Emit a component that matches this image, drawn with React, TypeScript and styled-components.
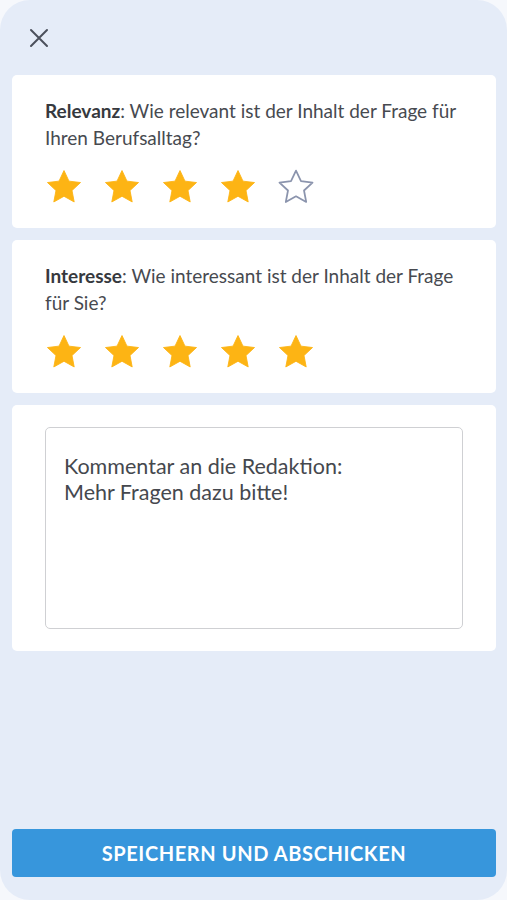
import styled, { createGlobalStyle } from 'styled-components'

const GlobalStyle = createGlobalStyle`
  html, body {
    margin: 0;
    padding: 0;
    background: #f6f8fc;
  }
  * { box-sizing: border-box; }
`

const Frame = styled.div`
  min-height: 900px;
  width: 507px;
  display: flex;
  flex-direction: column;
  background: #e5ecf8;
  border-radius: 30px;
  padding: 0 11px 23px 12px;
  font-family: Lato, "Noto Sans", sans-serif;
  color: #43474d;
`

const Header = styled.div`
  height: 75px;
  display: flex;
  align-items: center;
  padding-left: 17px;
`

const CloseButton = styled.button`
  border: none;
  background: none;
  padding: 0;
  width: 20px;
  height: 20px;
  display: flex;
  cursor: pointer;
  margin-top: 1px;
`

const Cards = styled.div`
  display: flex;
  flex-direction: column;
  gap: 12px;
`

const Card = styled.section<{ $pad?: string }>`
  background: #fff;
  border-radius: 5px;
  padding: ${p => p.$pad || '22px 30px 20px 33px'};
`

const Question = styled.p`
  margin: 0;
  font-size: 19px;
  line-height: 27px;
  color: #474a50;

  b {
    font-weight: 700;
    color: #36393e;
  }
`

const Stars = styled.div`
  display: flex;
  gap: 16px;
  margin-top: 15px;
  margin-left: -2px;
`

const StarIcon = styled.svg`
  width: 42px;
  height: 42px;
  display: block;
`

const CommentBox = styled.div`
  height: 202px;
  border: 1.5px solid #cfd0d3;
  border-radius: 5px;
  padding: 25px 18px;
  font-size: 21.5px;
  line-height: 26px;
  color: #45484e;
`

const Spacer = styled.div`
  flex: 1;
`

const SubmitButton = styled.button`
  height: 48px;
  width: 100%;
  border: none;
  border-radius: 4px;
  background: #3796dc;
  color: #fff;
  font-family: Lato, "Noto Sans", sans-serif;
  font-weight: 700;
  font-size: 20px;
  letter-spacing: 0.6px;
  text-transform: uppercase;
  cursor: pointer;
`

const Star = ({ filled }: { filled: boolean }) => (
  <StarIcon viewBox="0 0 24 24">
    <path
      d="M12 2.6l2.85 6.05 6.6.8-4.87 4.55 1.25 6.55L12 17.3l-5.83 3.25 1.25-6.55L2.55 9.45l6.6-.8z"
      fill={filled ? '#fdb414' : 'none'}
      stroke={filled ? '#fdb414' : '#8b94ad'}
      strokeWidth={filled ? 0.5 : 1}
      strokeLinejoin="round"
    />
  </StarIcon>
)

const Rating = ({ value }: { value: number }) => (
  <Stars>
    {[1, 2, 3, 4, 5].map(i => (
      <Star key={i} filled={i <= value} />
    ))}
  </Stars>
)

const App = () => {
  return (
    <Frame>
      <GlobalStyle />
      <Header>
        <CloseButton aria-label="Schließen">
          <svg width="20" height="20" viewBox="0 0 20 20">
            <path d="M2 2l16 16M18 2L2 18" stroke="#4b505c" strokeWidth="2" strokeLinecap="round" />
          </svg>
        </CloseButton>
      </Header>
      <Cards>
        <Card>
          <Question>
            <b>Relevanz</b>: Wie relevant ist der Inhalt der Frage für Ihren Berufsalltag?
          </Question>
          <Rating value={4} />
        </Card>
        <Card>
          <Question>
            <b>Interesse</b>: Wie interessant ist der Inhalt der Frage für Sie?
          </Question>
          <Rating value={5} />
        </Card>
        <Card $pad="22px 33px">
          <CommentBox>
            Kommentar an die Redaktion:
            <br />
            Mehr Fragen dazu bitte!
          </CommentBox>
        </Card>
      </Cards>
      <Spacer />
      <SubmitButton>Speichern und abschicken</SubmitButton>
    </Frame>
  )
}

export default App
